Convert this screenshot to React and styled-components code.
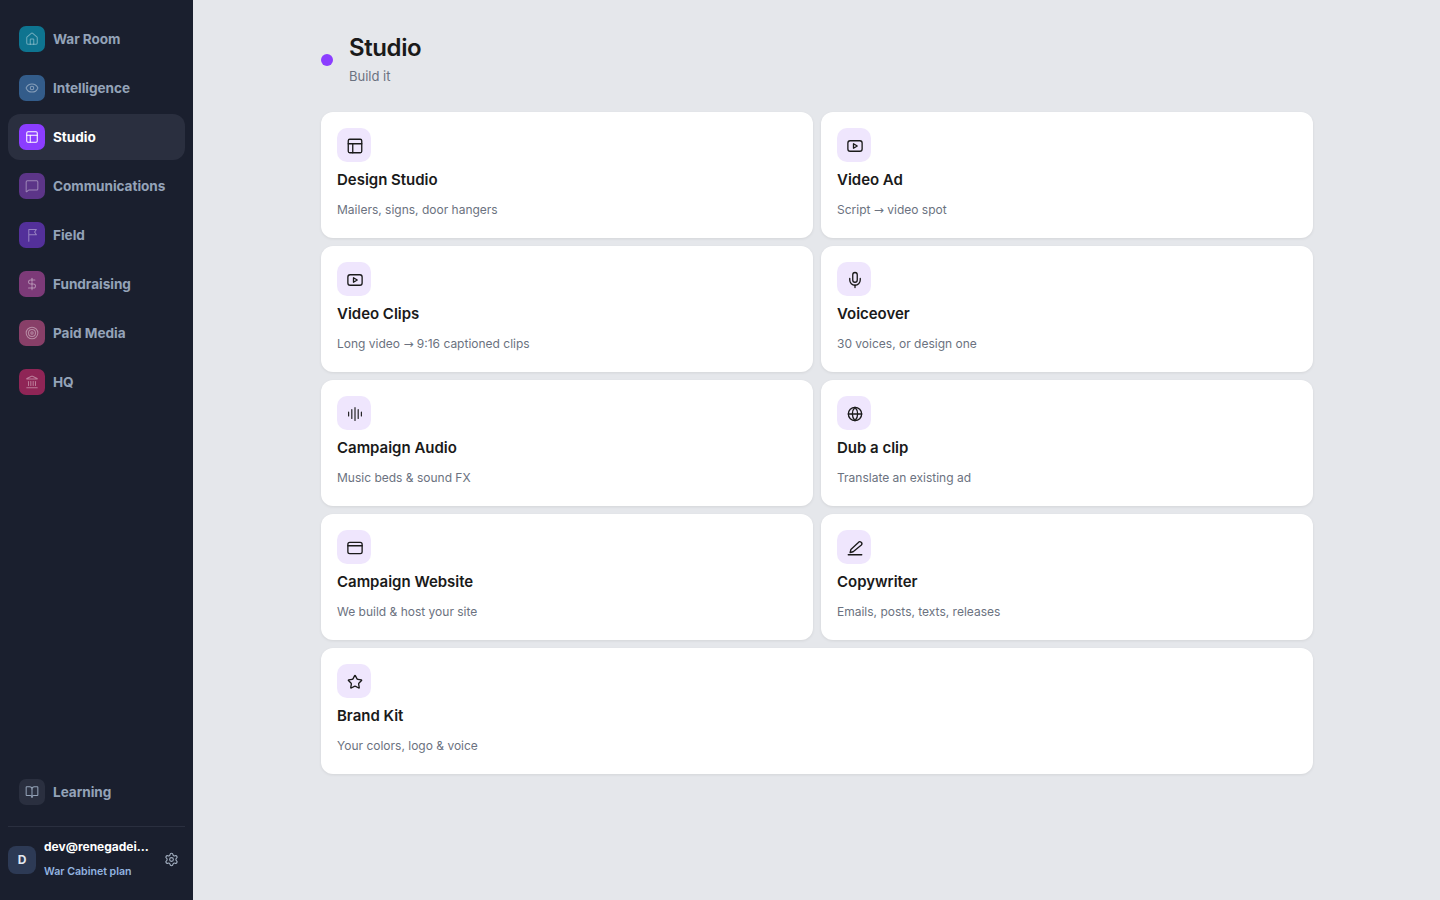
import React from "react";
import styled, { createGlobalStyle } from "styled-components";
import {
  House,
  Eye,
  PanelsTopLeft,
  MessageSquare,
  DollarSign,
  Target,
  Landmark,
  BookOpen,
  Settings,
  Mic,
  Globe,
  Star,
} from "lucide-react";

function Glyph({ size = 18, strokeWidth = 1.75, children }) {
  return (
    <svg
      width={size}
      height={size}
      viewBox="0 0 24 24"
      fill="none"
      stroke="currentColor"
      strokeWidth={strokeWidth}
      strokeLinecap="round"
      strokeLinejoin="round"
    >
      {children}
    </svg>
  );
}

const VideoIcon = (props) => (
  <Glyph {...props}>
    <rect x="2.5" y="5" width="19" height="14" rx="3" />
    <path d="M10 9l5 3-5 3z" />
  </Glyph>
);

const WaveIcon = (props) => (
  <Glyph {...props} strokeWidth={1.5}>
    <path d="M3.5 9.5v5M7.75 6v12M12 3.5v17M16.25 6v12M20.5 9.5v5" />
  </Glyph>
);

const WindowIcon = (props) => (
  <Glyph {...props}>
    <rect x="2.5" y="4.5" width="19" height="15" rx="2.5" />
    <path d="M2.5 9h19" />
  </Glyph>
);

const PenIcon = (props) => (
  <Glyph {...props}>
    <path d="M16.5 4.6a2.5 2.5 0 0 1 4 3.4L9.5 17l-4 1 1-4z" />
    <path d="M3 21h18" />
  </Glyph>
);

const FlagIcon = (props) => (
  <Glyph {...props}>
    <path d="M6.5 22.5V2.5h13l-3 4.5 3 4.5h-13" />
  </Glyph>
);

const navItems = [
  { label: "War Room", icon: House, bg: "#0e7490" },
  { label: "Intelligence", icon: Eye, bg: "#335c8a" },
  { label: "Studio", icon: PanelsTopLeft, bg: "#8b3dff", active: true },
  { label: "Communications", icon: MessageSquare, bg: "#5c3588" },
  { label: "Field", icon: FlagIcon, bg: "#53309a" },
  { label: "Fundraising", icon: DollarSign, bg: "#7c3a78" },
  { label: "Paid Media", icon: Target, bg: "#883f68" },
  { label: "HQ", icon: Landmark, bg: "#8f2556" },
];

const tools = [
  { title: "Design Studio", text: "Mailers, signs, door hangers", icon: PanelsTopLeft, size: 18 },
  { title: "Video Ad", text: ["Script ", " video spot"], icon: VideoIcon, size: 18 },
  { title: "Video Clips", text: ["Long video ", " 9:16 captioned clips"], icon: VideoIcon, size: 18 },
  { title: "Voiceover", text: "30 voices, or design one", icon: Mic, size: 18 },
  { title: "Campaign Audio", text: "Music beds & sound FX", icon: WaveIcon, size: 18 },
  { title: "Dub a clip", text: "Translate an existing ad", icon: Globe, size: 16 },
  { title: "Campaign Website", text: "We build & host your site", icon: WindowIcon, size: 18 },
  { title: "Copywriter", text: "Emails, posts, texts, releases", icon: PenIcon, size: 18 },
  { title: "Brand Kit", text: "Your colors, logo & voice", icon: Star, size: 16, wide: true },
];

export default function App() {
  return (
    <>
      <GlobalStyle />
      <Shell>
        <Sidebar>
          <Nav>
            {navItems.map((item) => (
              <NavItem key={item.label} $active={item.active}>
                <NavIcon $bg={item.bg} $active={item.active}>
                  <item.icon size={14} strokeWidth={1.75} />
                </NavIcon>
                {item.label}
              </NavItem>
            ))}
          </Nav>
          <Footer>
            <LearningItem>
              <NavIcon $bg="#2a2f3f" $active>
                <BookOpen size={14} strokeWidth={1.75} color="#94a3b8" />
              </NavIcon>
              Learning
            </LearningItem>
            <Account>
              <Avatar>D</Avatar>
              <AccountText>
                <Email>dev@renegadei...</Email>
                <Plan>War Cabinet plan</Plan>
              </AccountText>
              <Settings size={15} strokeWidth={1.75} color="#a3afc0" />
            </Account>
          </Footer>
        </Sidebar>
        <Main>
          <Content>
            <Header>
              <Dot />
              <div>
                <Title>Studio</Title>
                <Subtitle>Build it</Subtitle>
              </div>
            </Header>
            <Grid>
              {tools.map((tool) => (
                <Card key={tool.title} $wide={tool.wide}>
                  <CardIcon>
                    <tool.icon size={tool.size} strokeWidth={tool.size === 16 ? 2 : 1.75} />
                  </CardIcon>
                  <CardTitle>{tool.title}</CardTitle>
                  <CardText>
                    {Array.isArray(tool.text) ? (
                      <>
                        {tool.text[0]}
                        <Arrow>→</Arrow>
                        {tool.text[1]}
                      </>
                    ) : (
                      tool.text
                    )}
                  </CardText>
                </Card>
              ))}
            </Grid>
          </Content>
        </Main>
      </Shell>
    </>
  );
}

const GlobalStyle = createGlobalStyle`
  * { box-sizing: border-box; }
  body {
    margin: 0;
    font-family: Inter, "Noto Sans", sans-serif;
    background: #e5e7eb;
  }
`;

const Shell = styled.div`
  display: flex;
  height: 900px;
  overflow: hidden;
`;

const Sidebar = styled.aside`
  width: 193px;
  flex-shrink: 0;
  background: #1a1f2e;
  display: flex;
  flex-direction: column;
  justify-content: space-between;
  padding: 16px 8px 0;
`;

const Nav = styled.nav`
  display: flex;
  flex-direction: column;
  gap: 3px;
`;

const NavItem = styled.div`
  height: 46px;
  display: flex;
  align-items: center;
  gap: 8px;
  padding: 0 11px 1px;
  border-radius: 12px;
  font-size: 13.6px;
  font-weight: 700;
  letter-spacing: -0.04px;
  color: ${(p) => (p.$active ? "#ffffff" : "#94a3b8")};
  background: ${(p) => (p.$active ? "#2a2f3f" : "transparent")};
`;

const NavIcon = styled.span`
  width: 26px;
  height: 26px;
  border-radius: 7px;
  display: flex;
  align-items: center;
  justify-content: center;
  background: ${(p) => p.$bg};
  color: ${(p) => (p.$active ? "#ffffff" : "rgba(255, 255, 255, 0.4)")};
`;

const Footer = styled.div`
  display: flex;
  flex-direction: column;
`;

const LearningItem = styled(NavItem)`
  margin-bottom: 11px;
`;

const Account = styled.div`
  height: 74px;
  border-top: 1px solid #2a2f3f;
  display: flex;
  align-items: center;
  gap: 8px;
  padding: 0 6px 8px 0;
`;

const Avatar = styled.div`
  width: 28px;
  height: 28px;
  border-radius: 8px;
  background: #2d3a55;
  color: #e2e8f0;
  font-size: 12px;
  font-weight: 700;
  display: flex;
  align-items: center;
  justify-content: center;
`;

const AccountText = styled.div`
  flex: 1;
  min-width: 0;
  display: flex;
  flex-direction: column;
  gap: 10px;
  margin-bottom: 2px;
`;

const Email = styled.div`
  font-size: 12px;
  line-height: 16px;
  font-weight: 700;
  color: #ffffff;
`;

const Plan = styled.div`
  font-size: 10.6px;
  line-height: 14px;
  font-weight: 600;
  color: #93b4e0;
`;

const Main = styled.main`
  flex: 1;
  min-width: 0;
`;

const Content = styled.div`
  width: 992px;
  margin-left: 128px;
  padding-top: 32px;
`;

const Header = styled.header`
  display: flex;
  align-items: center;
  gap: 16px;
  margin-bottom: 24px;
`;

const Dot = styled.span`
  width: 12px;
  height: 12px;
  border-radius: 50%;
  background: #8b3dff;
`;

const Title = styled.h1`
  margin: 0;
  font-size: 24px;
  line-height: 32px;
  font-weight: 600;
  letter-spacing: -0.4px;
  color: #1a1a1a;
`;

const Subtitle = styled.p`
  margin: 2px 0 2px;
  font-size: 13px;
  line-height: 20px;
  color: #6b7280;
`;

const Grid = styled.div`
  display: grid;
  grid-template-columns: 1fr 1fr;
  gap: 8px;
`;

const Card = styled.div`
  grid-column: ${(p) => (p.$wide ? "1 / -1" : "auto")};
  height: 126px;
  padding: 16px;
  background: #ffffff;
  border-radius: 12px;
  box-shadow: 0 1px 3px rgba(0, 0, 0, 0.08);
`;

const CardIcon = styled.div`
  width: 34px;
  height: 34px;
  padding: 1px 0 0 1px;
  border-radius: 10px;
  background: #efe6fd;
  color: #1a1a1a;
  display: flex;
  align-items: center;
  justify-content: center;
`;

const CardTitle = styled.div`
  margin-top: 6px;
  font-size: 15px;
  line-height: 24px;
  font-weight: 570;
  letter-spacing: -0.02px;
  color: #1a1a1a;
`;

const CardText = styled.div`
  margin-top: 10px;
  font-size: 12px;
  line-height: 16px;
  color: #6b7280;
`;

const Arrow = styled.span`
  font-family: "DejaVu Sans", sans-serif;
`;
